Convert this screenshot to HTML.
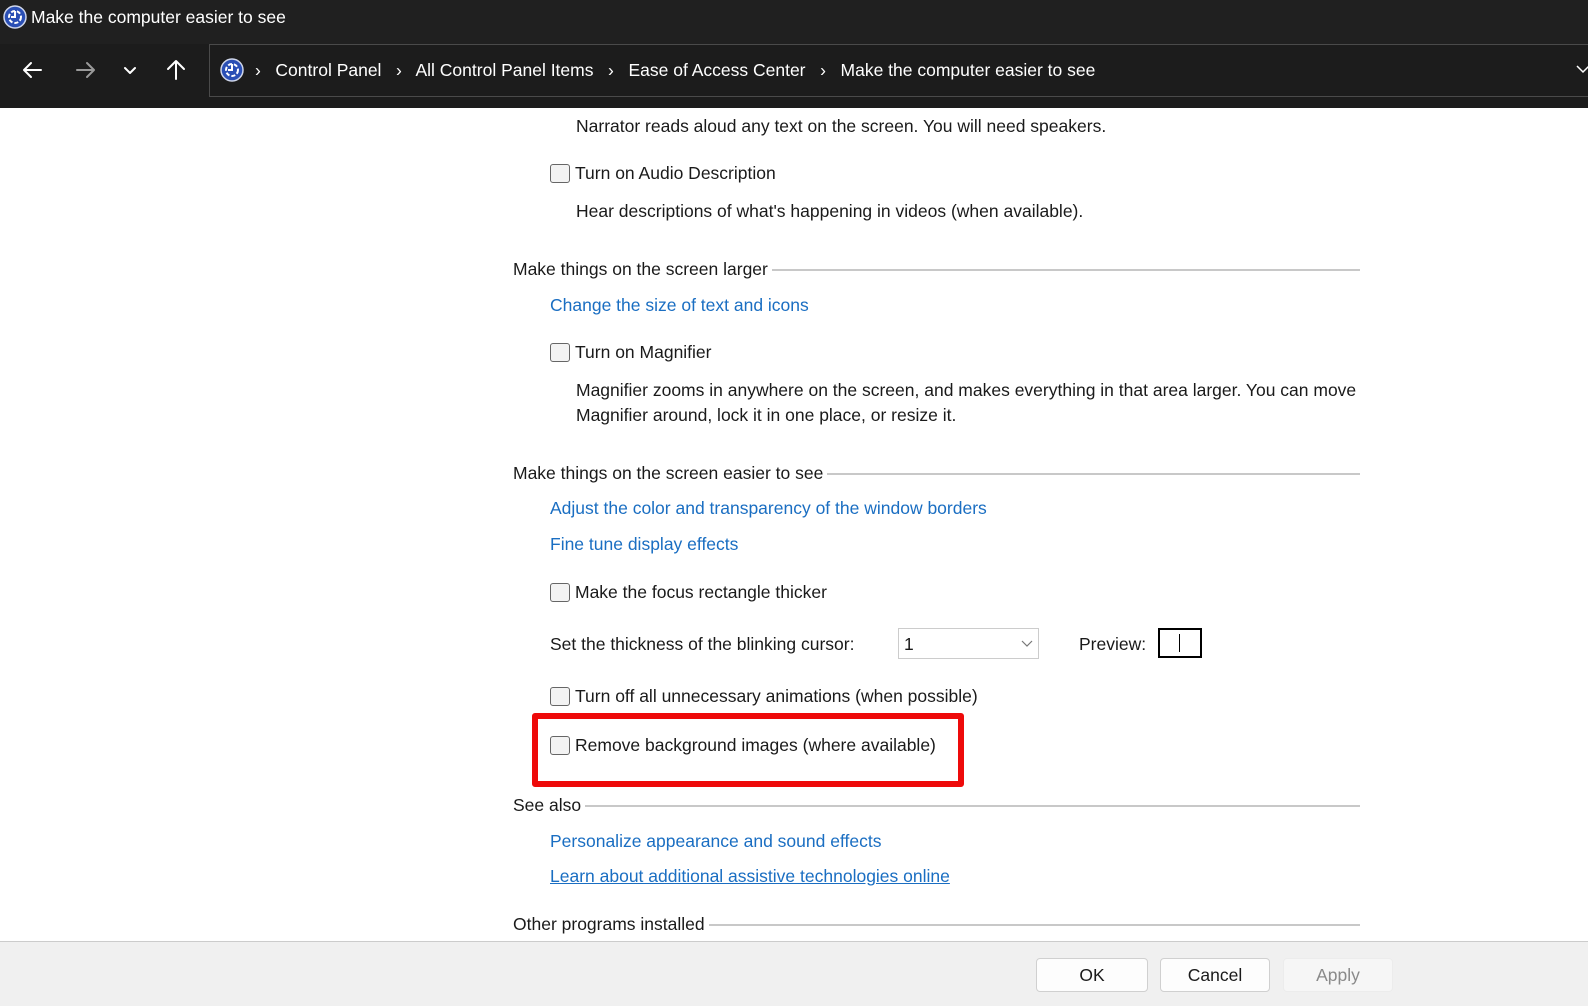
<!DOCTYPE html>
<html><head><meta charset="utf-8"><style>
*{margin:0;padding:0;box-sizing:border-box}
body{width:1588px;height:1006px;overflow:hidden;background:#fff;font-family:"Liberation Sans",sans-serif;position:relative;color:#1a1a1a}
.a{position:absolute;white-space:nowrap;line-height:20px}
.t{font-size:17.5px}
.l{color:#1a6ec2;font-size:17.5px}
.cb{position:absolute;width:20px;height:19px;border:1.3px solid #666;border-radius:3px;background:#f3f3f3}
.sec{position:absolute;left:513px;width:847px;display:flex;align-items:center;font-size:17.5px;line-height:20px;white-space:nowrap}
.sec i{flex:1;height:2px;background:#c8c8c8;margin-left:4px;margin-top:2px}
.btn{position:absolute;top:958px;height:34px;border:1px solid #d0d0d0;border-radius:4px;background:#fdfdfd;font-size:17.5px;text-align:center;line-height:32px}
</style></head><body>
<div style="position:absolute;left:0;top:0;width:1588px;height:44px;background:#202020"></div>
<div style="position:absolute;left:0;top:44px;width:1588px;height:64px;background:#1c1c1c"></div>
<svg class="a" style="left:3px;top:5px" width="24" height="24" viewBox="0 0 24 24"><circle cx="12" cy="12" r="11" fill="#2a4fb5" stroke="#cfd6ea" stroke-width="1.5"/><circle cx="12" cy="12" r="6" fill="none" stroke="#fff" stroke-width="2" stroke-dasharray="4 2"/><path d="M12 6v6h-4" stroke="#fff" stroke-width="2" fill="none"/></svg>
<div class="a" style="left:31px;top:7px;font-size:17.5px;color:#fff">Make the computer easier to see</div>
<svg class="a" style="left:20px;top:58px" width="180" height="24" viewBox="0 0 180 24"><g fill="none" stroke-width="2" stroke-linecap="round" stroke-linejoin="round"><path d="M21 12H5M11 5l-7 7 7 7" stroke="#fff"/><path d="M57 12h16M67 5l7 7-7 7" stroke="#9a9a9a"/><path d="M105 10l5 5 5-5" stroke="#fff"/><path d="M156 21V4M148 11l8-8 8 8" stroke="#fff"/></g></svg>
<div style="position:absolute;left:209px;top:44px;width:1390px;height:53px;border:1px solid #4a4a4a;background:#1c1c1c"></div>
<svg class="a" style="left:220px;top:58px" width="24" height="24" viewBox="0 0 24 24"><circle cx="12" cy="12" r="11" fill="#2a4fb5" stroke="#cfd6ea" stroke-width="1.5"/><circle cx="12" cy="12" r="6" fill="none" stroke="#fff" stroke-width="2" stroke-dasharray="4 2"/><path d="M12 6v6h-4" stroke="#fff" stroke-width="2" fill="none"/></svg>
<div class="a" style="left:255px;top:60px;font-size:17.5px;color:#fff">›&nbsp;&nbsp; Control Panel&nbsp;&nbsp; ›&nbsp;&nbsp; All Control Panel Items&nbsp;&nbsp; ›&nbsp;&nbsp; Ease of Access Center&nbsp;&nbsp; ›&nbsp;&nbsp; Make the computer easier to see</div>
<svg class="a" style="left:1576px;top:64px" width="12" height="10"><path d="M1 2l6 6 6-6" stroke="#fff" stroke-width="1.5" fill="none"/></svg>

<div class="a t" style="left:576px;top:116px">Narrator reads aloud any text on the screen. You will need speakers.</div>
<div class="cb" style="left:550px;top:164px"></div><div class="a t" style="left:575px;top:163px">Turn on Audio Description</div>
<div class="a t" style="left:576px;top:201px">Hear descriptions of what's happening in videos (when available).</div>

<div class="sec" style="top:259px">Make things on the screen larger<i></i></div>
<div class="a l" style="left:550px;top:295px">Change the size of text and icons</div>
<div class="cb" style="left:550px;top:343px"></div><div class="a t" style="left:575px;top:342px">Turn on Magnifier</div>
<div class="a t" style="left:576px;top:380px">Magnifier zooms in anywhere on the screen, and makes everything in that area larger. You can move</div>
<div class="a t" style="left:576px;top:405px">Magnifier around, lock it in one place, or resize it.</div>

<div class="sec" style="top:463px">Make things on the screen easier to see<i></i></div>
<div class="a l" style="left:550px;top:498px">Adjust the color and transparency of the window borders</div>
<div class="a l" style="left:550px;top:534px">Fine tune display effects</div>
<div class="cb" style="left:550px;top:583px"></div><div class="a t" style="left:575px;top:582px">Make the focus rectangle thicker</div>
<div class="a t" style="left:550px;top:634px">Set the thickness of the blinking cursor:</div>
<div style="position:absolute;left:898px;top:628px;width:141px;height:31px;border:1px solid #ccc;background:#fff"></div>
<div class="a t" style="left:904px;top:634px">1</div>
<svg class="a" style="left:1021px;top:640px" width="12" height="8"><path d="M1 1l5 5 5-5" stroke="#777" stroke-width="1.2" fill="none"/></svg>
<div class="a t" style="left:1079px;top:634px">Preview:</div>
<div style="position:absolute;left:1158px;top:628px;width:44px;height:30px;border:2px solid #000"></div>
<div style="position:absolute;left:1179px;top:634px;width:1px;height:18px;background:#000"></div>
<div class="cb" style="left:550px;top:687px"></div><div class="a t" style="left:575px;top:686px">Turn off all unnecessary animations (when possible)</div>
<div style="position:absolute;left:532px;top:713px;width:432px;height:74px;border:6px solid #ee0a0a;border-radius:3px"></div>
<div class="cb" style="left:550px;top:736px"></div><div class="a t" style="left:575px;top:735px">Remove background images (where available)</div>

<div class="sec" style="top:795px">See also<i></i></div>
<div class="a l" style="left:550px;top:831px">Personalize appearance and sound effects</div>
<div class="a l" style="left:550px;top:866px;text-decoration:underline">Learn about additional assistive technologies online</div>
<div class="sec" style="top:914px">Other programs installed<i></i></div>

<div style="position:absolute;left:0;top:941px;width:1588px;height:65px;background:#f0f0f0;border-top:1px solid #ccc"></div>
<div class="btn" style="left:1036px;width:112px">OK</div>
<div class="btn" style="left:1160px;width:110px">Cancel</div>
<div class="btn" style="left:1283px;width:110px;border-color:#ececec;background:#f6f6f6;color:#8a8a8a">Apply</div>
</body></html>
